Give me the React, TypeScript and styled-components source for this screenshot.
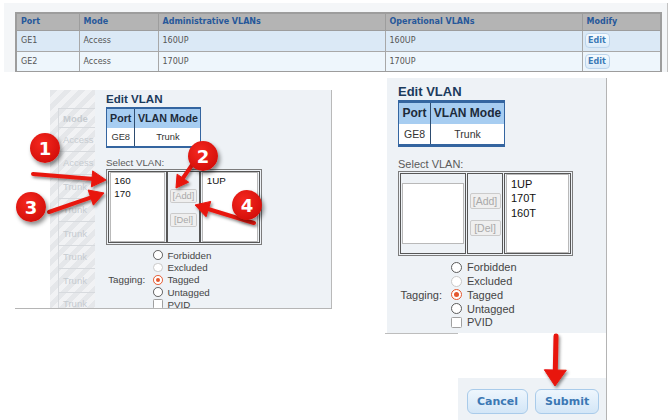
import styled, { createGlobalStyle } from "styled-components";

type PortRow = { port: string; mode: string; admin: string; oper: string };

const ports: PortRow[] = [
  { port: "GE1", mode: "Access", admin: "160UP", oper: "160UP" },
  { port: "GE2", mode: "Access", admin: "170UP", oper: "170UP" },
];

const ghostRows = ["Access", "Access", "Trunk", "Trunk", "Trunk", "Trunk", "Trunk", "Trunk"];

type Arrow = { x1: number; y1: number; x2: number; y2: number; head?: number; half?: number; stroke?: number };

const arrows: Arrow[] = [
  { x1: 33, y1: 174, x2: 106, y2: 180 },
  { x1: 49, y1: 212, x2: 104, y2: 193 },
  { x1: 192, y1: 165, x2: 176, y2: 188, head: 12, half: 7 },
  { x1: 254, y1: 223, x2: 195, y2: 205 },
  { x1: 556, y1: 336, x2: 555, y2: 386, head: 16, half: 11, stroke: 5 },
];

const badges = [
  { n: 1, x: 45, y: 148 },
  { n: 2, x: 203, y: 156 },
  { n: 3, x: 31, y: 207 },
  { n: 4, x: 247, y: 205 },
];

const GlobalStyle = createGlobalStyle`
  html, body { margin: 0; padding: 0; background: #ffffff; }
  body { font-family: "Liberation Sans", Arial, sans-serif; }
  * { box-sizing: border-box; }
`;

const Page = styled.div`
  position: relative;
  width: 671px;
  height: 420px;
  overflow: hidden;
  background: #fff;
`;

/* ---------- port list strip ---------- */

const PortStrip = styled.div`
  margin: 3px 0 0 4px;
  width: 664px;
  height: 69px;
  padding: 9px 0 0 11px;
  background: #f4f6f8;
  border-right: 1px solid #c2c2c2;
  overflow: hidden;
`;

const PortTable = styled.table`
  width: 645px;
  table-layout: fixed;
  border-collapse: collapse;
  border: 2px solid #9d9d9d;
  font-family: "DejaVu Sans", Verdana, sans-serif;
  font-size: 8px;

  th {
    height: 17px;
    padding: 0 4px;
    background: #b4b4b4;
    color: #27589a;
    font-weight: bold;
    text-align: left;
    border: 1px solid #9d9d9d;
  }

  td {
    height: 21px;
    padding: 0 4px;
    color: #555;
    border: 1px solid #a8a8a8;
  }

  td.modify {
    padding-left: 2px;
  }

  tbody tr:nth-child(odd) td {
    background: #dbe9f6;
  }

  tbody tr:nth-child(even) td {
    background: #eef6fc;
  }
`;

const EditButton = styled.button`
  display: block;
  width: 25px;
  height: 15px;
  padding: 0;
  border: 1px solid #bcd5ec;
  border-radius: 4px;
  background: linear-gradient(#f6fbff, #dcebf8);
  color: #3b79b6;
  font: bold 8px "DejaVu Sans", Verdana, sans-serif;
`;

/* ---------- screenshots row ---------- */

const Shots = styled.div`
  display: flex;
  align-items: flex-start;
`;

const LeftShot = styled.div`
  display: flex;
  width: 317px;
  height: 219px;
  margin: 18px 0 0 15px;
  padding-left: 35px;
  border-bottom: 1px solid #b5b5b5;
  overflow: hidden;
`;

const Ghost = styled.div`
  flex: none;
  width: 45px;
  padding: 18px 0 0 8px;
  background: repeating-linear-gradient(135deg, #e5e7ea 0 5px, #f1f2f4 5px 10px);
  overflow: hidden;
`;

const GhostCell = styled.div<{ $head?: boolean }>`
  display: flex;
  align-items: center;
  height: ${(p) => (p.$head ? 19 : 23.5)}px;
  padding-left: 4px;
  border-top: 1px solid #d7dade;
  border-left: 1px solid #d7dade;
  font-size: 9.5px;
  font-weight: ${(p) => (p.$head ? "bold" : "normal")};
  color: #c6cbd0;
  white-space: nowrap;
`;

const Panel = styled.div<{ $padTop: number }>`
  background: #eef2f6;
  padding: ${(p) => p.$padTop}px 0 0 11px;
  overflow: hidden;
`;

const LeftPanel = styled(Panel)`
  flex: 1;
  border-right: 1px solid #b9b9b9;
`;

const RightShot = styled.div`
  display: flex;
  flex-direction: column;
  width: 222px;
  height: 342px;
  margin: 6px 0 0 53px;
  border-right: 1px solid #b4b4b4;
`;

const RightPanel = styled(Panel)`
  height: 255px;
  margin-left: 2px;
`;

const CutLine = styled.div`
  width: 73px;
  height: 1px;
  background: #bdbdbd;
`;

const Footer = styled.div`
  display: flex;
  gap: 7px;
  flex: 1;
  margin: 44px 0 0 73px;
  padding: 11px 0 0 9px;
  background: #eef2f6;
`;

const FooterButton = styled.button`
  height: 25px;
  padding: 0 9px;
  border: 1px solid #a9cbea;
  border-radius: 6px;
  background: linear-gradient(#eef6fd, #d3e6f7);
  color: #3b78b4;
  font: bold 11px "DejaVu Sans", Verdana, sans-serif;
`;

/* ---------- edit vlan dialog ---------- */

const Content = styled.div<{ $zoom: number }>`
  zoom: ${(p) => p.$zoom};
`;

const Title = styled.div`
  font-size: 13px;
  font-weight: bold;
  line-height: 17px;
  color: #1b3a5c;
`;

const ModeTable = styled.table`
  width: 106px;
  table-layout: fixed;
  border-collapse: collapse;
  border-top: 3px solid #3465a0;
  border-bottom: 3px solid #3465a0;
  border-left: 1px solid #3465a0;
  border-right: 1px solid #3465a0;

  th {
    height: 22px;
    padding: 0;
    background: #a7cdf1;
    color: #1c2a3a;
    font-size: 12px;
    font-weight: bold;
    text-align: center;
  }

  td {
    height: 21.5px;
    padding: 0;
    background: #fff;
    color: #333;
    font-size: 10.5px;
    text-align: center;
  }

  th + th,
  td + td {
    border-left: 1px solid #2d4c70;
  }
`;

const FieldLabel = styled.div`
  margin-top: 10px;
  font-size: 11px;
  line-height: 14px;
  color: #5a5a5a;
`;

const Picker = styled.div`
  display: flex;
  gap: 1px;
  width: 175px;
  height: 85px;
  padding: 1px;
  border: 1px solid #7c7c7c;
`;

const PickCell = styled.div<{ $w: number; $buttons?: boolean }>`
  flex: none;
  display: flex;
  flex-direction: column;
  align-items: ${(p) => (p.$buttons ? "center" : "stretch")};
  justify-content: ${(p) => (p.$buttons ? "flex-start" : "center")};
  gap: 11px;
  width: ${(p) => p.$w}px;
  padding: ${(p) => (p.$buttons ? "19px 0 0" : "0 1px")};
  border: 1px solid #575757;
`;

const ListBox = styled.div<{ $fill: boolean }>`
  height: ${(p) => (p.$fill ? "100%" : "61px")};
  padding: 2px 4px;
  background: #fff;
  border: 1px solid #b9b9b9;
  font-size: 11px;
  line-height: 14.5px;
  color: #111;
`;

const MoveButton = styled.button`
  width: 31px;
  height: 16px;
  padding: 0;
  border: 1px solid #cbcbcb;
  border-radius: 2px;
  background: #efefef;
  color: #a9a9a9;
  font: 10.5px "Liberation Sans", Arial, sans-serif;
`;

const Tagging = styled.div`
  display: flex;
  align-items: center;
  margin-top: 5px;
  font-size: 11px;
  color: #454545;
`;

const TagLabel = styled.span`
  width: 46px;
  padding-right: 2px;
  text-align: right;
`;

const Options = styled.div`
  margin-left: 7px;
`;

const Option = styled.div`
  display: flex;
  align-items: center;
  gap: 5px;
  height: 13.75px;
`;

type RadioState = "on" | "off" | "disabled";

const Radio = styled.span<{ $state: RadioState }>`
  display: grid;
  place-items: center;
  width: 11px;
  height: 11px;
  border-radius: 50%;
  background: #fff;
  border: 1.5px solid
    ${(p) => (p.$state === "on" ? "#e4572e" : p.$state === "disabled" ? "#c9c9c9" : "#5c5c5c")};

  &::after {
    content: "";
    width: 5px;
    height: 5px;
    border-radius: 50%;
    background: ${(p) => (p.$state === "on" ? "#e4572e" : "transparent")};
  }
`;

const Check = styled.span`
  width: 11px;
  height: 11px;
  border: 1px solid #a0a0a0;
  border-radius: 1.5px;
  background: #fff;
`;

const tagOptions: { label: string; state: RadioState }[] = [
  { label: "Forbidden", state: "off" },
  { label: "Excluded", state: "disabled" },
  { label: "Tagged", state: "on" },
  { label: "Untagged", state: "off" },
];

function EditVlan({ zoom, available, members }: { zoom: number; available: string[]; members: string[] }) {
  return (
    <Content $zoom={zoom}>
      <Title>Edit VLAN</Title>
      <ModeTable>
        <colgroup>
          <col style={{ width: 32 }} />
          <col style={{ width: 74 }} />
        </colgroup>
        <thead>
          <tr>
            <th>Port</th>
            <th>VLAN Mode</th>
          </tr>
        </thead>
        <tbody>
          <tr>
            <td>GE8</td>
            <td>Trunk</td>
          </tr>
        </tbody>
      </ModeTable>
      <FieldLabel>Select VLAN:</FieldLabel>
      <Picker>
        <PickCell $w={66}>
          <ListBox $fill={available.length > 0}>
            {available.map((v) => (
              <div key={v}>{v}</div>
            ))}
          </ListBox>
        </PickCell>
        <PickCell $w={36} $buttons>
          <MoveButton disabled>[Add]</MoveButton>
          <MoveButton disabled>[Del]</MoveButton>
        </PickCell>
        <PickCell $w={67}>
          <ListBox $fill>
            {members.map((v) => (
              <div key={v}>{v}</div>
            ))}
          </ListBox>
        </PickCell>
      </Picker>
      <Tagging>
        <TagLabel>Tagging:</TagLabel>
        <Options>
          {tagOptions.map((o) => (
            <Option key={o.label}>
              <Radio $state={o.state} />
              {o.label}
            </Option>
          ))}
          <Option>
            <Check />
            PVID
          </Option>
        </Options>
      </Tagging>
    </Content>
  );
}

/* ---------- callouts ---------- */

const Callouts = styled.svg`
  position: absolute;
  left: 0;
  top: 0;
  pointer-events: none;
`;

const Badge = styled.div<{ $x: number; $y: number }>`
  position: absolute;
  left: ${(p) => p.$x - 15}px;
  top: ${(p) => p.$y - 15}px;
  display: grid;
  place-items: center;
  width: 30px;
  height: 30px;
  border-radius: 50%;
  background: radial-gradient(circle at 40% 35%, #f5281f, #d40f0a 75%);
  box-shadow: 2px 3px 4px rgba(0, 0, 0, 0.45);
  color: #fff;
  font: bold 18px "DejaVu Sans", Verdana, sans-serif;
`;

function ArrowShape({ a }: { a: Arrow }) {
  const head = a.head ?? 14;
  const half = a.half ?? 8;
  const len = Math.hypot(a.x2 - a.x1, a.y2 - a.y1);
  const ux = (a.x2 - a.x1) / len;
  const uy = (a.y2 - a.y1) / len;
  const bx = a.x2 - ux * head;
  const by = a.y2 - uy * head;
  const pts = `${a.x2},${a.y2} ${bx - uy * half},${by + ux * half} ${bx + uy * half},${by - ux * half}`;
  return (
    <g filter="url(#callout-shadow)" fill="#e8150e" stroke="#e8150e">
      <line x1={a.x1} y1={a.y1} x2={bx + ux * 2} y2={by + uy * 2} strokeWidth={a.stroke ?? 4} strokeLinecap="round" />
      <polygon points={pts} strokeWidth={1} strokeLinejoin="round" />
    </g>
  );
}

export default function App() {
  return (
    <Page>
      <GlobalStyle />
      <PortStrip>
        <PortTable>
          <colgroup>
            <col style={{ width: 63 }} />
            <col style={{ width: 79 }} />
            <col style={{ width: 227 }} />
            <col style={{ width: 197 }} />
            <col style={{ width: 79 }} />
          </colgroup>
          <thead>
            <tr>
              <th>Port</th>
              <th>Mode</th>
              <th>Administrative VLANs</th>
              <th>Operational VLANs</th>
              <th>Modify</th>
            </tr>
          </thead>
          <tbody>
            {ports.map((r) => (
              <tr key={r.port}>
                <td>{r.port}</td>
                <td>{r.mode}</td>
                <td>{r.admin}</td>
                <td>{r.oper}</td>
                <td className="modify">
                  <EditButton>Edit</EditButton>
                </td>
              </tr>
            ))}
          </tbody>
        </PortTable>
      </PortStrip>

      <Shots>
        <LeftShot>
          <Ghost>
            <GhostCell $head>Mode</GhostCell>
            {ghostRows.map((m, i) => (
              <GhostCell key={i}>{m}</GhostCell>
            ))}
          </Ghost>
          <LeftPanel $padTop={2}>
            <EditVlan zoom={0.89} available={["160", "170"]} members={["1UP"]} />
          </LeftPanel>
        </LeftShot>

        <RightShot>
          <RightPanel $padTop={5}>
            <EditVlan zoom={1} available={[]} members={["1UP", "170T", "160T"]} />
          </RightPanel>
          <CutLine />
          <Footer>
            <FooterButton>Cancel</FooterButton>
            <FooterButton>Submit</FooterButton>
          </Footer>
        </RightShot>
      </Shots>

      <Callouts width={671} height={420}>
        <defs>
          <filter id="callout-shadow" x="-30%" y="-30%" width="160%" height="160%">
            <feDropShadow dx="1.5" dy="2" stdDeviation="1.5" floodColor="#000" floodOpacity="0.45" />
          </filter>
        </defs>
        {arrows.map((a, i) => (
          <ArrowShape key={i} a={a} />
        ))}
      </Callouts>
      {badges.map((b) => (
        <Badge key={b.n} $x={b.x} $y={b.y}>
          {b.n}
        </Badge>
      ))}
    </Page>
  );
}
